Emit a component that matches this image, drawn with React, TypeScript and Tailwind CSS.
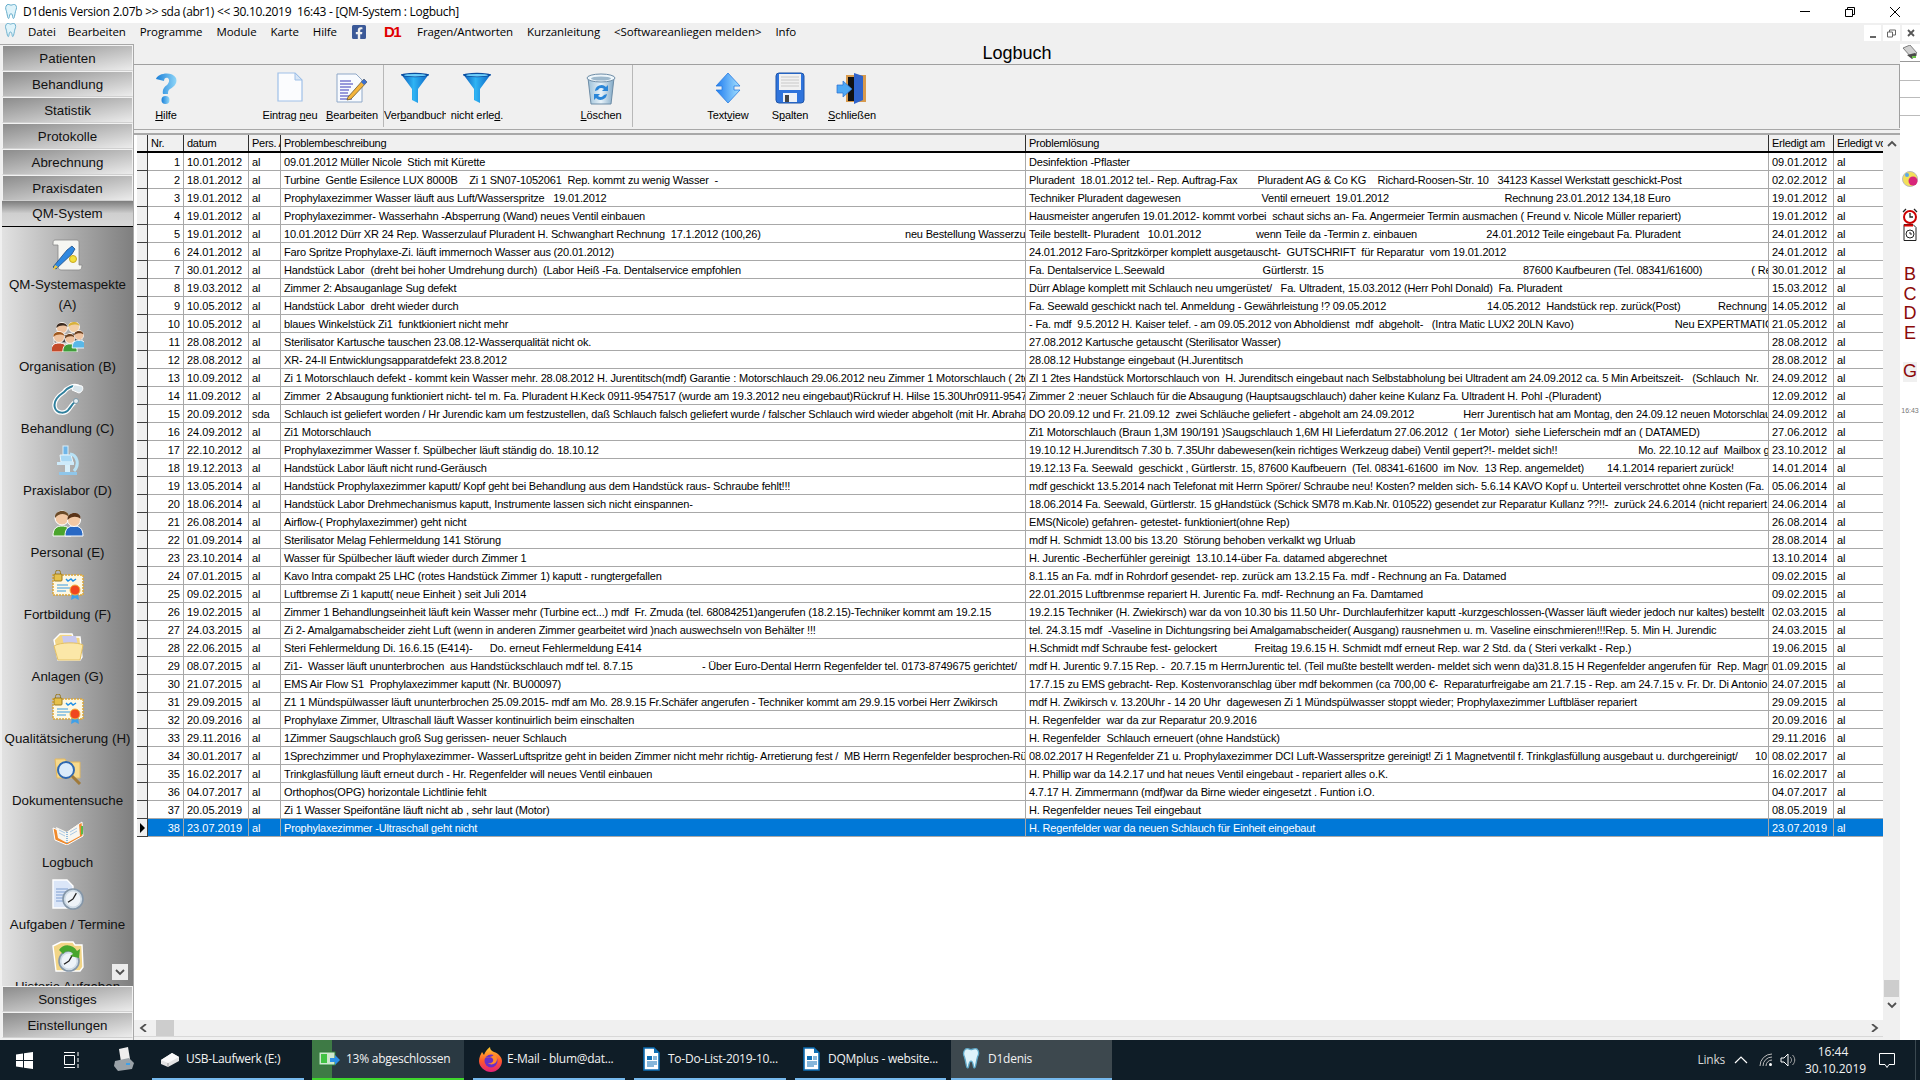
import { FaFacebookSquare } from "react-icons/fa";

const gap = (n: number) => " ".repeat(Math.round(n * 1.06));

type Row = [number, string, string, string, string, string];

const rows: Row[] = [
  [1, "10.01.2012", "al", "09.01.2012 Müller Nicole  Stich mit Kürette", "Desinfektion -Pflaster", "09.01.2012"],
  [2, "18.01.2012", "al", "Turbine  Gentle Esilence LUX 8000B    Zi 1 SN07-1052061  Rep. kommt zu wenig Wasser  -", `Pluradent  18.01.2012 tel.- Rep. Auftrag-Fax${gap(7)}Pluradent AG & Co KG    Richard-Roosen-Str. 10   34123 Kassel Werkstatt geschickt-Post`, "02.02.2012"],
  [3, "19.01.2012", "al", "Prophylaxezimmer Wasser läuft aus Luft/Wasserspritze   19.01.2012", `Techniker Pluradent dagewesen${gap(26)}Ventil erneuert  19.01.2012${gap(38)}Rechnung 23.01.2012 134,18 Euro`, "19.01.2012"],
  [4, "19.01.2012", "al", "Prophylaxezimmer- Wasserhahn -Absperrung (Wand) neues Ventil einbauen", "Hausmeister angerufen 19.01.2012- kommt vorbei  schaut sichs an- Fa. Angermeier Termin ausmachen ( Freund v. Nicole Müller repariert)", "19.01.2012"],
  [5, "19.01.2012", "al", `10.01.2012 Dürr XR 24 Rep. Wasserzulauf Pluradent H. Schwanghart Rechnung  17.1.2012 (100,26)${gap(47)}neu Bestellung Wasserzulauf`, `Teile bestellt- Pluradent   10.01.2012${gap(18)}wenn Teile da -Termin z. einbauen${gap(23)}24.01.2012 Teile eingebaut Fa. Pluradent`, "24.01.2012"],
  [6, "24.01.2012", "al", "Faro Spritze Prophylaxe-Zi. läuft immernoch Wasser aus (20.01.2012)", "24.01.2012 Faro-Spritzkörper komplett ausgetauscht-  GUTSCHRIFT  für Reparatur  vom 19.01.2012", "24.01.2012"],
  [7, "30.01.2012", "al", "Handstück Labor  (dreht bei hoher Umdrehung durch)  (Labor Heiß -Fa. Dentalservice empfohlen", `Fa. Dentalservice L.Seewald${gap(32)}Gürtlerstr. 15${gap(65)}87600 Kaufbeuren (Tel. 08341/61600)${gap(16)}( Rechnung`, "30.01.2012"],
  [8, "19.03.2012", "al", "Zimmer 2: Absauganlage Sug defekt", "Dürr Ablage komplett mit Schlauch neu umgerüstet/   Fa. Ultradent, 15.03.2012 (Herr Pohl Donald)  Fa. Pluradent", "15.03.2012"],
  [9, "10.05.2012", "al", "Handstück Labor  dreht wieder durch", `Fa. Seewald geschickt nach tel. Anmeldung - Gewährleistung !? 09.05.2012${gap(33)}14.05.2012  Handstück rep. zurück(Post)${gap(12)}Rechnung`, "14.05.2012"],
  [10, "10.05.2012", "al", "blaues Winkelstück Zi1  funktkioniert nicht mehr", `- Fa. mdf  9.5.2012 H. Kaiser telef. - am 09.05.2012 von Abholdienst  mdf  abgeholt-   (Intra Matic LUX2 20LN Kavo)${gap(33)}Neu EXPERTMATIC`, "21.05.2012"],
  [11, "28.08.2012", "al", "Sterilisator Kartusche tauschen 23.08.12-Wasserqualität nicht ok.", "27.08.2012 Kartusche getauscht (Sterilisator Wasser)", "28.08.2012"],
  [12, "28.08.2012", "al", "XR- 24-II Entwicklungsapparatdefekt 23.8.2012", "28.08.12 Hubstange eingebaut (H.Jurentitsch", "28.08.2012"],
  [13, "10.09.2012", "al", "Zi 1 Motorschlauch defekt - kommt kein Wasser mehr. 28.08.2012 H. Jurentitsch(mdf) Garantie : Motorschlauch 29.06.2012 neu Zimmer 1 Motorschlauch ( 2tes", "ZI 1 2tes Handstück Mortorschlauch von  H. Jurenditsch eingebaut nach Selbstabholung bei Ultradent am 24.09.2012 ca. 5 Min Arbeitszeit-   (Schlauch  Nr.", "24.09.2012"],
  [14, "11.09.2012", "al", "Zimmer  2 Absaugung funktioniert nicht- tel m. Fa. Pluradent H.Keck 0911-9547517 (wurde am 19.3.2012 neu eingebaut)Rückruf H. Hilse 15.30Uhr0911-9547", "Zimmer 2 :neuer Schlauch für die Absaugung (Hauptsaugschlauch) daher keine Kulanz Fa. Ultradent H. Pohl -(Pluradent)", "12.09.2012"],
  [15, "20.09.2012", "sda", "Schlauch ist geliefert worden / Hr Jurendic kam um festzustellen, daß Schlauch falsch geliefert wurde / falscher Schlauch wird wieder abgeholt (mit Hr. Abraham", `DO 20.09.12 und Fr. 21.09.12  zwei Schläuche geliefert - abgeholt am 24.09.2012${gap(16)}Herr Jurentisch hat am Montag, den 24.09.12 neuen Motorschlauch`, "24.09.2012"],
  [16, "24.09.2012", "al", "Zi1 Motorschlauch", "Zi1 Motorschlauch (Braun 1,3M 190/191 )Saugschlauch 1,6M HI Lieferdatum 27.06.2012  ( 1er Motor)  siehe Lieferschein mdf an ( DATAMED)", "27.06.2012"],
  [17, "22.10.2012", "al", "Prophylaxezimmer Wasser f. Spülbecher läuft ständig do. 18.10.12", `19.10.12 H.Jurenditsch 7.30 b. 7.35Uhr dabewesen(kein richtiges Werkzeug dabei) Ventil gepert?!- meldet sich!!${gap(26)}Mo. 22.10.12 auf  Mailbox gesprochen`, "23.10.2012"],
  [18, "19.12.2013", "al", "Handstück Labor läuft nicht rund-Geräusch", `19.12.13 Fa. Seewald  geschickt , Gürtlerstr. 15, 87600 Kaufbeuern  (Tel. 08341-61600  im Nov.  13 Rep. angemeldet)${gap(8)}14.1.2014 repariert zurück!`, "14.01.2014"],
  [19, "13.05.2014", "al", "Handstück Prophylaxezimmer kaputt/ Kopf geht bei Behandlung aus dem Handstück raus- Schraube fehlt!!!", "mdf geschickt 13.5.2014 nach Telefonat mit Herrn Spörer/ Schraube neu! Kosten? melden sich- 5.6.14 KAVO Kopf u. Unterteil verschrottet ohne Kosten (Fa.", "05.06.2014"],
  [20, "18.06.2014", "al", "Handstück Labor Drehmechanismus kaputt, Instrumente lassen sich nicht einspannen-", "18.06.2014 Fa. Seewald, Gürtlerstr. 15 gHandstück (Schick SM78 m.Kab.Nr. 010522) gesendet zur Reparatur Kullanz ??!!-  zurück 24.6.2014 (nicht repariert", "24.06.2014"],
  [21, "26.08.2014", "al", "Airflow-( Prophylaxezimmer) geht nicht", "EMS(Nicole) gefahren- getestet- funktioniert(ohne Rep)", "26.08.2014"],
  [22, "01.09.2014", "al", "Sterilisator Melag Fehlermeldung 141 Störung", "mdf H. Schmidt 13.00 bis 13.20  Störung behoben verkalkt wg Urluab", "28.08.2014"],
  [23, "23.10.2014", "al", "Wasser für Spülbecher läuft wieder durch Zimmer 1", "H. Jurentic -Becherfühler gereinigt  13.10.14-über Fa. datamed abgerechnet", "13.10.2014"],
  [24, "07.01.2015", "al", "Kavo Intra compakt 25 LHC (rotes Handstück Zimmer 1) kaputt - rungtergefallen", "8.1.15 an Fa. mdf in Rohrdorf gesendet- rep. zurück am 13.2.15 Fa. mdf - Rechnung an Fa. Datamed", "09.02.2015"],
  [25, "09.02.2015", "al", "Luftbremse Zi 1 kaputt( neue Einheit ) seit Juli 2014", "22.01.2015 Luftbrenmse repariert H. Jurentic Fa. mdf- Rechnung an Fa. Damtamed", "09.02.2015"],
  [26, "19.02.2015", "al", "Zimmer 1 Behandlungseinheit läuft kein Wasser mehr (Turbine ect...) mdf  Fr. Zmuda (tel. 68084251)angerufen (18.2.15)-Techniker kommt am 19.2.15", "19.2.15 Techniker (H. Zwiekirsch) war da von 10.30 bis 11.50 Uhr- Durchlauferhitzer kaputt -kurzgeschlossen-(Wasser läuft wieder jedoch nur kaltes) bestellt", "02.03.2015"],
  [27, "24.03.2015", "al", "Zi 2- Amalgamabscheider zieht Luft (wenn in anderen Zimmer gearbeitet wird )nach auswechseln von Behälter !!!", "tel. 24.3.15 mdf  -Vaseline in Dichtungsring bei Amalgamabscheider( Ausgang) rausnehmen u. m. Vaseline einschmieren!!!Rep. 5. Min H. Jurendic", "24.03.2015"],
  [28, "22.06.2015", "al", `Steri Fehlermeldung Di. 16.6.15 (E414)-${gap(6)}Do. erneut Fehlermeldung E414`, `H.Schmidt mdf Schraube fest- gelockert${gap(12)}Freitag 19.6.15 H. Schmidt mdf erneut Rep. war 2 Std. da ( Steri verkalkt - Rep.)`, "19.06.2015"],
  [29, "08.07.2015", "al", `Zi1-  Wasser läuft ununterbrochen  aus Handstückschlauch mdf tel. 8.7.15${gap(23)}- Über Euro-Dental Herrn Regenfelder tel. 0173-8749675 gerichtet/`, "mdf H. Jurentic 9.7.15 Rep. -  20.7.15 m HerrnJurentic tel. (Teil mußte bestellt werden- meldet sich wenn da)31.8.15 H Regenfelder angerufen für  Rep. Magnet", "01.09.2015"],
  [30, "21.07.2015", "al", "EMS Air Flow S1  Prophylaxezimmer kaputt (Nr. BU00097)", "17.7.15 zu EMS gebracht- Rep. Kostenvoranschlag über mdf bekommen (ca 700,00 €-  Reparaturfreigabe am 21.7.15 - Rep. am 24.7.15 v. Fr. Dr. Di Antonio", "24.07.2015"],
  [31, "29.09.2015", "al", "Z1 1 Mündspülwasser läuft ununterbrochen 25.09.2015- mdf am Mo. 28.9.15 Fr.Schäfer angerufen - Techniker kommt am 29.9.15 vorbei Herr Zwikirsch", "mdf H. Zwikirsch v. 13.20Uhr - 14 20 Uhr  dagewesen Zi 1 Mündspülwasser stoppt wieder; Prophylaxezimmer Luftbläser repariert", "29.09.2015"],
  [32, "20.09.2016", "al", "Prophylaxe Zimmer, Ultraschall läuft Wasser kontinuirlich beim einschalten", "H. Regenfelder  war da zur Reparatur 20.9.2016", "20.09.2016"],
  [33, "29.11.2016", "al", "1Zimmer Saugschlauch groß Sug gerissen- neuer Schlauch", "H. Regenfelder  Schlauch erneuert (ohne Handstück)", "29.11.2016"],
  [34, "30.01.2017", "al", "1Sprechzimmer und Prophylaxezimmer- WasserLuftspritze geht in beiden Zimmer nicht mehr richtig- Arretierung fest /  MB Herrn Regenfelder besprochen-Rückruf", `08.02.2017 H Regenfelder Z1 u. Prophylaxezimmer DCI Luft-Wasserspritze gereinigt! Zi 1 Magnetventil f. Trinkglasfüllung ausgebaut u. durchgereinigt/${gap(6)}10`, "08.02.2017"],
  [35, "16.02.2017", "al", "Trinkglasfüllung läuft erneut durch - Hr. Regenfelder will neues Ventil einbauen", "H. Phillip war da 14.2.17 und hat neues Ventil eingebaut - repariert alles o.K.", "16.02.2017"],
  [36, "04.07.2017", "al", "Orthophos(OPG) horizontale Lichtlinie fehlt", "4.7.17 H. Zimmermann (mdf)war da Birne wieder eingesetzt . Funtion i.O.", "04.07.2017"],
  [37, "20.05.2019", "al", "Zi 1 Wasser Speifontäne läuft nicht ab , sehr laut (Motor)", "H. Regenfelder neues Teil eingebaut", "08.05.2019"],
  [38, "23.07.2019", "al", "Prophylaxezimmer -Ultraschall geht nicht", "H. Regenfelder war da neuen Schlauch für Einheit eingebaut", "23.07.2019"],
];

const gridCols = "grid grid-rows-[18px] grid-cols-[11px_36px_65px_32px_745px_743px_65px_49px]";

const Tooth = ({ size = 16 }: { size?: number }) => (
  <svg width={size} height={size} viewBox="0 0 16 20">
    <path d="M3 1c2-1 3 0 5 .5C10 1 12 0 13.500 1c2 2 1.500 5 .5 7-.7 2-1 5-1.800 8-.4 2-1.400 3-1.900 1-.4-2-.6-5-2.300-5-1.700 0-1.800 3-2.300 5-.5 2-1.500 1-1.900-1C3.100 13 2.700 10 2 8 1 6 1 3 3 1z" fill="#dff3fa" stroke="#5fa9c9" strokeWidth="1.200" />
  </svg>
);

const Funnel = () => (
  <svg width="30" height="32" viewBox="0 0 30 32">
    <defs>
      <linearGradient id="fn" x1="0" x2="1">
        <stop offset="0" stopColor="#0a58b8" />
        <stop offset=".45" stopColor="#2fb4f4" />
        <stop offset="1" stopColor="#0b63c4" />
      </linearGradient>
    </defs>
    <path d="M1 2h28L18 17v14l-6-3V17z" fill="url(#fn)" />
    <ellipse cx="15" cy="3" rx="14" ry="2.200" fill="#0a4d9f" />
    <ellipse cx="15" cy="3.200" rx="11" ry="1.200" fill="#6fd0fa" />
  </svg>
);

const toolbarIcons: Record<string, React.ReactNode> = {
  help: (
    <svg width="24" height="33" viewBox="0 0 24 33">
      <defs>
        <linearGradient id="hq" x1="0" x2="1">
          <stop offset="0" stopColor="#1a7fd8" />
          <stop offset="1" stopColor="#8fd6f8" />
        </linearGradient>
      </defs>
      <path d="M2 7C4 1 18-1 22 6c2 6-3 9-6 11-2 1-2 3-2 5H9c-1-4 1-7 4-9 2-2 3-5 1-7-2-1-4 0-4 3z" fill="url(#hq)" />
      <circle cx="11.500" cy="28" r="4" fill="url(#hq)" />
    </svg>
  ),
  new: (
    <svg width="26" height="30" viewBox="0 0 26 30">
      <path d="M1 1h17l7 7v21H1z" fill="#fbfcfe" stroke="#9fc0e8" strokeWidth="1.200" />
      <path d="M18 1v7h7z" fill="#d8e6f6" stroke="#9fc0e8" />
    </svg>
  ),
  edit: (
    <svg width="32" height="32" viewBox="0 0 32 32">
      <path d="M1 2h19l6 6v22H1z" fill="#f8fbff" stroke="#8fa8c8" />
      <path d="M4 9h11M4 12h13M4 15h11M4 18h9M4 21h8M4 24h10M4 27h12" stroke="#3a3ab8" strokeWidth="1.200" />
      <path d="M12 25l16-18 3 3-16 17-4 1z" fill="#f4b43c" stroke="#6b5a30" strokeWidth=".8" />
      <path d="M25 10l3-3 3 3-3 3z" fill="#3a6fd0" />
    </svg>
  ),
  filter: <Funnel />,
  trash: (
    <svg width="32" height="34" viewBox="0 0 32 34">
      <defs>
        <linearGradient id="tr" x1="0" x2="1">
          <stop offset="0" stopColor="#9cc0d8" />
          <stop offset=".5" stopColor="#e8f3fa" />
          <stop offset="1" stopColor="#7ea6c4" />
        </linearGradient>
      </defs>
      <path d="M3 6l3 26h20l3-26z" fill="url(#tr)" stroke="#6d8ca6" />
      <ellipse cx="16" cy="6" rx="14" ry="4" fill="#eef6fb" stroke="#6d8ca6" />
      <ellipse cx="16" cy="6.500" rx="10" ry="2" fill="#9db8cc" />
      <path d="M10 19a6.500 6.500 0 0 1 11-4l2-2v6h-6l2-2a4 4 0 0 0-6 1zM22 22a6.500 6.500 0 0 1-11 4l-2 2v-6h6l-2 2a4 4 0 0 0 6-1z" fill="#2a86d8" />
    </svg>
  ),
  textview: (
    <svg width="26" height="32" viewBox="0 0 26 32">
      <defs>
        <linearGradient id="tv" x1="0" x2="1">
          <stop offset="0" stopColor="#1e7cf0" />
          <stop offset="1" stopColor="#a4e0ff" />
        </linearGradient>
      </defs>
      <path d="M13 1l12 13h-6v4h6L13 31 1 18h6v-4H1z" fill="url(#tv)" stroke="#2a7be0" strokeWidth=".8" />
    </svg>
  ),
  save: (
    <svg width="30" height="32" viewBox="0 0 30 32">
      <rect x="1" y="1" width="28" height="30" rx="3" fill="#2f74dc" stroke="#1f55a8" />
      <rect x="4" y="2" width="22" height="16" fill="#f1f1f1" />
      <path d="M6 5h18M6 8h18M6 11h18M6 14h18" stroke="#c9c9c9" />
      <rect x="8" y="21" width="14" height="9" fill="#eef2f8" />
      <rect x="10" y="23" width="4" height="7" fill="#444" />
    </svg>
  ),
  exit: (
    <svg width="32" height="32" viewBox="0 0 32 32">
      <rect x="10" y="3" width="20" height="27" fill="#d89a4c" />
      <rect x="12" y="5" width="8" height="24" fill="#111" />
      <path d="M18 1l9 3v24l-9 4z" fill="#2f64cc" />
      <path d="M1 13h6V9l9 8-9 8v-4H1z" fill="#4ea8f4" stroke="#2a6fd0" strokeWidth=".7" />
    </svg>
  ),
};

const toolbarItems: ({ icon: string; before: string; key: string; after: string } | null | "sep" | "wide")[] = [
  { icon: "help", before: "", key: "H", after: "ilfe" },
  null,
  { icon: "new", before: "Eintrag ", key: "n", after: "eu" },
  { icon: "edit", before: "", key: "B", after: "earbeiten" },
  "sep",
  { icon: "filter", before: "Ver", key: "b", after: "andbuch" },
  { icon: "filter", before: "nicht erle", key: "d", after: "." },
  null,
  { icon: "trash", before: "", key: "L", after: "öschen" },
  "sep",
  "wide",
  { icon: "textview", before: "Text", key: "v", after: "iew" },
  { icon: "save", before: "S", key: "p", after: "alten" },
  { icon: "exit", before: "", key: "S", after: "chließen" },
];

const Person = ({ x, y, skin, shirt, hair, s = 1 }: { x: number; y: number; skin: string; shirt: string; hair: string; s?: number }) => (
  <g transform={`translate(${x} ${y}) scale(${s})`}>
    <path d="M-8 20c0-7 3-9 8-9s8 2 8 9z" fill={shirt} stroke="#fff" strokeWidth="1" />
    <circle cx="0" cy="5" r="5.500" fill={skin} stroke="#fff" strokeWidth=".8" />
    <path d="M-5.500 5c-1-6 10-7 11-1-3-2-8-2-11 1z" fill={hair} />
  </g>
);

const Certificate = () => (
  <svg width="32" height="30" viewBox="0 0 32 30">
    <rect x="1" y="5" width="30" height="20" fill="#fdf8e4" stroke="#d9a53a" strokeWidth="1.500" strokeDasharray="2 1" />
    <path d="M5 15h11M5 18h13M5 21h9" stroke="#3a9be0" />
    <path d="M14 9l2 2 3-2 2 2 3-2" stroke="#1d8fe8" strokeWidth="1.400" fill="none" />
    <rect x="2" y="4" width="8" height="7" rx="1" fill="#e6c04a" stroke="#9a7a20" />
    <path d="M3.500 4V2.500a2.500 2.500 0 0 1 5 0V4" fill="none" stroke="#9a7a20" />
    <path d="M20 24l-1 6 4-2 4 2-1-6z" fill="#3fa0e8" />
    <circle cx="23" cy="20" r="5" fill="#f0461e" stroke="#f4b43c" />
  </svg>
);

const OpenFolder = () => (
  <svg width="32" height="30" viewBox="0 0 32 30">
    <path d="M2 8l6-6h12l1 3h7l2 20-2 3H6z" fill="#f2d586" stroke="#fff" strokeWidth="1.400" />
    <path d="M10 4h14l2 10H12z" fill="#c9c9ef" />
    <path d="M2 14c6-4 24-4 29-1l-3 15H6z" fill="#fbe7a8" stroke="#e3bf62" />
  </svg>
);

const ClockFace = ({ cx, cy, r }: { cx: number; cy: number; r: number }) => (
  <g>
    <circle cx={cx} cy={cy} r={r} fill="#cfdbe6" stroke="#8496a8" strokeWidth="1.600" />
    <circle cx={cx} cy={cy} r={r - 2.500} fill="#eef3f8" />
    <path d={`M${cx} ${cy}l${-r / 2} ${r / 3}M${cx} ${cy}l${r / 3} ${-r / 1.700}`} stroke="#222" strokeWidth="1.300" />
  </g>
);

const sideIcons: Record<string, React.ReactNode> = {
  scroll: (
    <svg width="32" height="32" viewBox="0 0 32 32">
      <path d="M3 1h22c2 0 2 2 2 4v21h3c0 3-1 5-3 5H9c-2 0-3-2-3-4V6H1c0-3 0-5 2-5z" fill="#f6f6f2" stroke="#888" strokeWidth=".8" />
      <path d="M1 28l14-17 5-4 3 3-3 5-16 15z" fill="#2f88e0" stroke="#123f77" strokeWidth=".7" />
      <path d="M1 31l2-5 3 2z" fill="#f2c83c" />
      <circle cx="21" cy="20" r="3.500" fill="#f4e13c" stroke="#c9a820" />
    </svg>
  ),
  group: (
    <svg width="32" height="30" viewBox="0 0 32 30">
      <Person x={10} y={1} skin="#eec3a0" shirt="#444" hair="#3a2a20" />
      <Person x={22} y={0} skin="#f2cfa6" shirt="#333" hair="#d8b23c" />
      <Person x={7} y={10} skin="#eec3a0" shirt="#c44a2a" hair="#a05a20" />
      <Person x={18} y={12} skin="#eec3a0" shirt="#3f9c3a" hair="#6a4020" s={0.9} />
      <Person x={27} y={9} skin="#eec3a0" shirt="#5ab8e8" hair="#6a4020" s={0.85} />
    </svg>
  ),
  stethoscope: (
    <svg width="32" height="32" viewBox="0 0 32 32">
      <path d="M28 5c-6-5-14 1-16 4C6 13 1 19 3 25c2 6 11 6 14 1 2-2 3-5 6-7" fill="none" stroke="#fff" strokeWidth="4.500" />
      <path d="M28 5c-6-5-14 1-16 4C6 13 1 19 3 25c2 6 11 6 14 1 2-2 3-5 6-7" fill="none" stroke="#2f7f9c" strokeWidth="2" />
      <path d="M22 2l8 1c2 3 0 6-3 7l-7-3z" fill="#d8e4ea" stroke="#fff" />
      <circle cx="24" cy="18" r="2.500" fill="#e8eef2" stroke="#7a9aaa" />
    </svg>
  ),
  microscope: (
    <svg width="24" height="32" viewBox="0 0 24 32">
      <rect x="7" y="1" width="5" height="9" fill="#6fb5e8" stroke="#d8eefa" />
      <path d="M4 10h11l2 7H5z" fill="#a9d8f4" stroke="#e8f6fd" />
      <path d="M14 9c7 1 10 10 4 17" fill="none" stroke="#b8e2f6" strokeWidth="3" />
      <rect x="1" y="17" width="17" height="3" fill="#cdeafa" />
      <path d="M3 27h18v3H3z" fill="#8fc6ea" />
      <rect x="9" y="20" width="5" height="7" fill="#d8effa" />
    </svg>
  ),
  people: (
    <svg width="32" height="28" viewBox="0 0 32 28">
      <path d="M1 27c0-8 4-10 9-10s9 2 9 10z" fill="#4ba52c" stroke="#fff" />
      <circle cx="10" cy="9" r="7" fill="#f2c8a4" stroke="#fff" />
      <path d="M3 9C2 0 17 0 17 8 13 4 7 4 3 9z" fill="#6a4a28" />
      <path d="M13 27c0-8 4-10 9-10s9 2 9 10z" fill="#2868c4" stroke="#fff" />
      <circle cx="22" cy="11" r="6.500" fill="#f2c8a4" stroke="#fff" />
      <path d="M15.500 11c-1-9 14-9 13-1-3-3-9-3-13 1z" fill="#5a3418" />
    </svg>
  ),
  cert: <Certificate />,
  folder: <OpenFolder />,
  search: (
    <svg width="28" height="28" viewBox="0 0 28 28">
      <path d="M1 2h10l2 3h13v16H3z" fill="#f6d98c" stroke="#e2b860" />
      <circle cx="12" cy="13" r="8" fill="#dcecfa" stroke="#2f68b0" strokeWidth="2" />
      <path d="M18 19l8 8" stroke="#a07a3a" strokeWidth="3" />
    </svg>
  ),
  book: (
    <svg width="32" height="24" viewBox="0 0 32 24">
      <path d="M1 7l13 5 16-11 1 14-16 9L3 19z" fill="#f08a2c" stroke="#fff" />
      <path d="M4 6l11 5 12-8 1 12-13 7L6 17z" fill="#f8f6f0" />
      <path d="M15 11v11" stroke="#6fa8d8" strokeWidth="1.500" strokeDasharray="1 1" />
      <path d="M7 9l6 3M7 12l6 3M18 11l7-4M18 14l7-4" stroke="#aac8e4" />
      <path d="M29 5l2 0v8l-2 1z" fill="#5eb844" />
    </svg>
  ),
  docclock: (
    <svg width="32" height="32" viewBox="0 0 32 32">
      <path d="M1 1h14l6 6v22H1z" fill="#dbe6f8" stroke="#fff" strokeWidth="1.400" />
      <path d="M4 10h12M4 13h10M4 16h9M4 19h8M4 22h8" stroke="#7e9ed0" />
      <ClockFace cx={21} cy={20} r={10} />
    </svg>
  ),
  folderclock: (
    <svg width="32" height="32" viewBox="0 0 32 32">
      <path d="M1 5l8-4h12l2 3h7l1 22-3 4H4z" fill="#f2d586" stroke="#fff" strokeWidth="1.400" />
      <ClockFace cx={17} cy={20} r={10} />
      <path d="M7 9c4-7 14-6 18 1l3-2-1 9-9-2 3-2c-2-3-7-4-10 0z" fill="#47a62e" />
    </svg>
  ),
};

const sideItems: { icon: string; label: string[] }[] = [
  { icon: "scroll", label: ["QM-Systemaspekte", "(A)"] },
  { icon: "group", label: ["Organisation (B)"] },
  { icon: "stethoscope", label: ["Behandlung (C)"] },
  { icon: "microscope", label: ["Praxislabor (D)"] },
  { icon: "people", label: ["Personal (E)"] },
  { icon: "cert", label: ["Fortbildung (F)"] },
  { icon: "folder", label: ["Anlagen (G)"] },
  { icon: "cert", label: ["Qualitätsicherung (H)"] },
  { icon: "search", label: ["Dokumentensuche"] },
  { icon: "book", label: ["Logbuch"] },
  { icon: "docclock", label: ["Aufgaben / Termine"] },
  { icon: "folderclock", label: ["Historie Aufgaben"] },
];

const SideButton = ({ label }: { label: string }) => (
  <div className="h-[26px] shrink-0 pt-px border border-[#f2f2f2] border-b-[#d0d0d0] bg-linear-to-br from-[#8c8c8c] to-[#ececec] flex items-center justify-center text-[13.33px] text-[#111]">
    {label}
  </div>
);

const Chevron = ({ d, cls = "" }: { d: string; cls?: string }) => (
  <svg width="10" height="8" viewBox="0 0 10 8" className={cls}>
    <path d={d} fill="none" stroke="#505050" strokeWidth="1.800" />
  </svg>
);

const DocIcon = () => (
  <svg width="17" height="24" viewBox="0 0 17 24">
    <path d="M1 1h10l5 5v17H1z" fill="#fff" stroke="#0f6fb5" strokeWidth="1.600" />
    <path d="M11 1v5h5z" fill="#0f6fb5" />
    <rect x="4" y="9" width="5" height="4" fill="#0f6fb5" />
    <path d="M10 10h4M10 12h4M4 15h10M4 17h10M4 19h7" stroke="#0f6fb5" />
  </svg>
);

const headCell = "border-r border-[#303030] px-[3px] leading-[17px] tracking-[-0.25px] overflow-hidden";

const App = () => {
  return (
    <div className="w-[1920px] h-[1080px] overflow-hidden flex flex-col bg-[#f0f0f0] font-['Liberation_Sans',sans-serif] text-black">
      {/* window title */}
      <div className="h-[23px] shrink-0 bg-white flex items-center relative pl-[3px] text-[12px] font-['Open_Sans',sans-serif]">
        <Tooth size={16} />
        <span className="ml-[4px] whitespace-pre tracking-[-0.28px]">D1denis Version 2.07b &gt;&gt; sda (abr1) &lt;&lt; 30.10.2019  16:43 - [QM-System : Logbuch]</span>
        <div className="ml-auto flex items-center gap-[35px] pr-[20px]">
          <div className="w-[10px] h-px bg-black" />
          <svg width="10" height="10" viewBox="0 0 10 10"><path d="M.5 2.500h7v7h-7zM2.500 2.500v-2h7v7h-2" fill="none" stroke="#000" /></svg>
          <svg width="10" height="10" viewBox="0 0 10 10"><path d="M0 0l10 10M10 0L0 10" stroke="#000" /></svg>
        </div>
      </div>

      {/* menu */}
      <div className="h-[21px] shrink-0 flex items-start pl-[3px] text-[11.5px] leading-[18px] font-['Open_Sans',sans-serif] whitespace-pre">
        <Tooth size={15} />
        <div className="ml-[10px] flex items-center gap-[14px] tracking-[-0.1px]">
          <span>Datei</span>
          <span className="-ml-[2px]">Bearbeiten</span>
          <span>Programme</span>
          <span>Module</span>
          <span>Karte</span>
          <span>Hilfe</span>
          <FaFacebookSquare className="text-[#3b5998] text-[16px]" />
          <span className="mx-[3px] font-['Liberation_Sans',sans-serif] font-bold text-[15px] leading-[18px] text-[#e00000] tracking-[-1.5px]">D1</span>
          <span>Fragen/Antworten</span>
          <span>Kurzanleitung</span>
          <span>&lt;Softwareanliegen melden&gt;</span>
          <span>Info</span>
        </div>
        <div className="ml-auto mt-[2px] flex items-center gap-[2px] text-[#555]">
          <div className="w-[17px] h-[16px] bg-white flex items-end justify-center pb-[3px]"><div className="w-[6px] h-[2px] bg-[#666]" /></div>
          <div className="w-[17px] h-[16px] bg-white flex items-center justify-center">
            <svg width="9" height="9" viewBox="0 0 9 9"><path d="M.5 3h5v5h-5zM2.500 3V1h6v5h-3" fill="none" stroke="#666" /></svg>
          </div>
          <div className="w-[18px] h-[16px] bg-white flex items-center justify-center">
            <svg width="8" height="8" viewBox="0 0 8 8"><path d="M1 1l6 6M7 1L1 7" stroke="#555" strokeWidth="1.800" /></svg>
          </div>
        </div>
      </div>

      <div className="flex-1 flex min-h-0">
        {/* left navigation */}
        <div className="w-[134px] shrink-0 flex flex-col border-t border-r border-[#a8a8a8] pl-[2px] pb-[2px]">
          <SideButton label="Patienten" />
          <SideButton label="Behandlung" />
          <SideButton label="Statistik" />
          <SideButton label="Protokolle" />
          <SideButton label="Abrechnung" />
          <SideButton label="Praxisdaten" />
          <div className="h-[26px] shrink-0 pt-px border-b border-black bg-linear-to-b from-[#7d7d7d] via-[#cfcfcf] to-[#d8d8d8] flex items-center justify-center text-[13.33px] text-[#111]">
            QM-System
          </div>
          <div className="flex-1 min-h-0 overflow-hidden relative bg-linear-to-r from-[#e2e2e2] to-[#7f7f7f] pt-[6px]">
            {sideItems.map((item) => (
              <div key={item.label[0]} className="flex flex-col items-center pt-[6px]">
                <div className="h-[32px] flex items-center justify-center">{sideIcons[item.icon]}</div>
                <div className="mt-[4px] text-[13.33px] leading-[20px] text-[#111] text-center whitespace-nowrap">
                  {item.label.map((line) => (
                    <div key={line}>{line}</div>
                  ))}
                </div>
              </div>
            ))}
            <div className="absolute right-[5px] bottom-[6px] w-[16px] h-[16px] bg-[#ececec] flex items-center justify-center">
              <Chevron d="M1 2l4 4 4-4" />
            </div>
          </div>
          <SideButton label="Sonstiges" />
          <SideButton label="Einstellungen" />
        </div>

        {/* main area */}
        <div className="w-[1766px] shrink-0 flex flex-col pb-[3px]">
          <div className="h-[20px] shrink-0 pb-[3px] flex items-center justify-center text-[18px] leading-none">Logbuch</div>

          <div className="h-[64px] shrink-0 flex border-t border-r-2 border-[#a0a0a0] pl-px -mr-px">
            {toolbarItems.map((item, i) => {
              if (item === "sep") return <div key={i} className="w-px h-[62px] bg-[#b8b8b8]" />;
              if (item === "wide") return <div key={i} className="w-[64px]" />;
              if (item === null) return <div key={i} className="w-[62px]" />;
              return (
                <div key={i} className="w-[62px] flex flex-col items-center overflow-hidden">
                  <div className="h-[43px] pt-[7px] flex items-start justify-center">{toolbarIcons[item.icon]}</div>
                  <div className="w-full text-[11px] leading-[14px] whitespace-pre text-center overflow-hidden tracking-[-0.1px]">
                    {item.before}
                    <u>{item.key}</u>
                    {item.after}
                  </div>
                </div>
              );
            })}
          </div>

          <div className="h-[6px] shrink-0 border-t border-[#a8a8a8] border-b-2 mt-[1px] -mr-px" />

          {/* grid */}
          <div className="flex-1 min-h-0 flex">
            <div className="w-[1749px] pl-[3px] flex flex-col text-[11px] bg-white">
              <div className={`${gridCols} h-[18px] shrink-0 overflow-hidden bg-[#f0f0f0] border-b-2 border-black whitespace-pre`}>
                <div className="border-r border-[#303030]" />
                <div className={headCell}>Nr.</div>
                <div className={headCell}>datum</div>
                <div className={headCell}>Pers. Anm</div>
                <div className={headCell}>Problembeschreibung</div>
                <div className={headCell}>Problemlösung</div>
                <div className={headCell}>Erledigt am</div>
                <div className="px-[3px] leading-[17px] tracking-[-0.25px] overflow-hidden">Erledigt von</div>
              </div>
              <div className="flex-1 min-h-0 overflow-hidden">
                {rows.map(([nr, datum, pers, problem, solution, done]) => {
                  const active = nr === 38;
                  const line = "border-r border-b border-[#a8a8a8] overflow-hidden";
                  return (
                    <div key={nr} className={`${gridCols} h-[18px] leading-[19px] whitespace-pre ${active ? "bg-[#0078d7] text-white" : ""}`}>
                      <div className="bg-[#f0f0f0] border-r border-b border-[#404040] flex items-center">
                        {active && <div className="ml-[3px] w-0 h-0 border-y-[5px] border-y-transparent border-l-[5px] border-l-black" />}
                      </div>
                      <div className={`${line} text-right pr-[3px]`}>{nr}</div>
                      <div className={`${line} pl-[3px]`}>{datum}</div>
                      <div className={`${line} pl-[3px]`}>{pers}</div>
                      <div className={`${line} pl-[3px] tracking-[-0.17px]`}>{problem}</div>
                      <div className={`${line} pl-[3px] tracking-[-0.17px]`}>{solution}</div>
                      <div className={`${line} pl-[3px]`}>{done}</div>
                      <div className="border-b border-[#a8a8a8] pl-[3px] overflow-hidden">al</div>
                    </div>
                  );
                })}
              </div>
              <div className="h-[17px] shrink-0 bg-[#f0f0f0] -ml-[3px] pl-[5px] flex items-center border-b border-[#d8d8d8]">
                <Chevron d="M7 0L2 4l5 4" />
                <div className="ml-[7px] w-[18px] h-full bg-[#cdcdcd]" />
                <Chevron d="M3 0l5 4-5 4" cls="ml-auto mr-[4px]" />
              </div>
            </div>
            <div className="w-[17px] bg-[#f0f0f0] flex flex-col items-center py-[5px]">
              <Chevron d="M1 6l4-4 4 4" />
              <div className="mt-auto w-[15px] h-[17px] bg-[#cdcdcd]" />
              <Chevron d="M1 2l4 4 4-4" cls="mt-[4px] mb-[23px]" />
            </div>
          </div>
        </div>

        {/* right strip */}
        <div className="w-[20px] shrink-0 bg-white flex flex-col items-center">
          <div className="h-[18px] w-full border-b border-[#999] flex items-center justify-center">
            <svg width="16" height="15" viewBox="0 0 16 15">
              <path d="M1 3l7-3 7 8-6 4z" fill="#d0d0d0" stroke="#555" strokeWidth=".7" />
              <path d="M5 10l5 4 5-4-2-2z" fill="#4a4a4a" />
              <rect x="10" y="11" width="4" height="2" fill="#6cc04a" />
            </svg>
          </div>
          <div className="h-[19px] w-full border-b border-[#bbb]" />
          <div className="h-[17px] w-full border-b border-[#bbb]" />
          <div className="h-[18px] w-full border-b border-[#bbb]" />
          <svg width="16" height="17" viewBox="0 0 16 17" className="mt-[55px]">
            <circle cx="8" cy="8" r="7.500" fill="#f2e05a" stroke="#bbb" />
            <circle cx="11" cy="10" r="4.500" fill="#d8257a" />
            <circle cx="5" cy="4" r="2" fill="#5aa8e8" />
          </svg>
          <svg width="16" height="16" viewBox="0 0 16 16" className="mt-[20px]">
            <circle cx="8" cy="9" r="6" fill="#fff" stroke="#c00" strokeWidth="2" />
            <path d="M8 5v4h3M1 4l3-3M15 4l-3-3" stroke="#222" strokeWidth="1.300" fill="none" />
          </svg>
          <svg width="14" height="17" viewBox="0 0 14 17">
            <path d="M1 .5h9l3 3v13H1z" fill="#fff" stroke="#222" />
            <path d="M1 .5h9v2H1z" fill="#d00" />
            <circle cx="7" cy="10" r="4" fill="none" stroke="#222" />
            <path d="M7 8v2h2" stroke="#222" fill="none" />
          </svg>
          <div className="mt-[24px] flex flex-col items-center text-[18px] leading-[19.500px] text-[#8b0a0a]">
            <span>B</span>
            <span>C</span>
            <span>D</span>
            <span>E</span>
            <span className="mt-[19px] w-full text-center bg-[#f0f0f0]">G</span>
          </div>
          <span className="mt-[24px] text-[7px] text-[#777]">16:43</span>
        </div>
      </div>

      {/* taskbar */}
      <div className="h-[40px] shrink-0 bg-[#0f1d27] flex items-stretch text-[12px] text-[#f2f2f2] font-['Open_Sans',sans-serif] whitespace-pre tracking-[-0.25px]">
        <div className="w-[48px] flex items-center justify-center pl-[1px]">
          <svg width="17" height="17" viewBox="0 0 17 17"><path d="M0 2.500l7-1v6.500H0zM8 1.300L17 0v8H8zM0 9h7v6.500l-7-1zM8 9h9v8l-9-1.300z" fill="#fff" /></svg>
        </div>
        <div className="w-[48px] flex items-center justify-center">
          <svg width="17" height="16" viewBox="0 0 17 16"><path d="M.5 3.500h10v9H.5zM0 .5h11M0 15.500h11" stroke="#fff" fill="none" /><path d="M14 0v4M14 6v4M14 12v4" stroke="#fff" /></svg>
        </div>
        <div className="w-[56px] flex items-center justify-center">
          <svg width="24" height="26" viewBox="0 0 24 26">
            <path d="M7 2l9-2 2 12-9 3z" fill="#eee" />
            <path d="M3 14l14-3 5 5-2 6-14 2-4-5z" fill="#9aa2a8" />
            <rect x="14" y="16" width="4" height="2" fill="#3fa0e8" />
          </svg>
        </div>
        <div className="w-[152px] border-b-[2px] border-[#76b9ed] flex items-center pl-[8px]">
          <svg width="20" height="18" viewBox="0 0 20 18">
            <path d="M1 10l11-7 7 4v4l-11 6-7-3z" fill="#e4e4e4" />
            <path d="M1 10l7 3 11-6-7-4z" fill="#fafafa" />
            <path d="M8 13v4" stroke="#999" />
          </svg>
          <span className="ml-[6px]">USB-Laufwerk (E:)</span>
        </div>
        <div className="ml-[8px] w-[152px] relative border-b-[2px] border-[#3fd62c] bg-[#2a3942] flex items-center">
          <div className="absolute inset-y-0 left-0 w-[20px] bg-[#3e7a45]" />
          <svg width="22" height="20" viewBox="0 0 22 20" className="relative ml-[7px]">
            <rect x="0" y="3" width="16" height="13" fill="#cfe8cf" stroke="#2f7f3a" />
            <rect x="2" y="5" width="6" height="9" fill="#42c244" />
            <path d="M11 9h5V6l5 5-5 5v-3h-5z" fill="#2a8fe8" />
          </svg>
          <span className="relative ml-[5px]">13% abgeschlossen</span>
        </div>
        <div className="ml-[9px] w-[152px] border-b-[2px] border-[#76b9ed] flex items-center pl-[5px]">
          <svg width="25" height="26" viewBox="0 0 25 26">
            <defs>
              <linearGradient id="ff" x1="0" y1="0" x2="0" y2="1">
                <stop offset="0" stopColor="#ffcb2e" />
                <stop offset=".55" stopColor="#ff5a2a" />
                <stop offset="1" stopColor="#e3207a" />
              </linearGradient>
            </defs>
            <path d="M12 1c0 3 2 4 4 5 4 1 8 5 8 9 0 6-5 11-11 11S1 21 1 15c0-4 2-7 3-9l2 3c1-3 3-6 6-8z" fill="url(#ff)" />
            <circle cx="13" cy="15" r="6.500" fill="#6a2fc8" />
            <path d="M7 12c3-2 7-1 8 1 1 3-2 5-5 4 3 3 9 1 9-4 0-3-2-5-4-6 2 3-2 4-8 5z" fill="#ff8a2a" />
          </svg>
          <span className="ml-[4px]">E-Mail - blum@dat...</span>
        </div>
        <div className="ml-[9px] w-[152px] border-b-[2px] border-[#76b9ed] flex items-center pl-[9px]">
          <DocIcon />
          <span className="ml-[8px]">To-Do-List-2019-10...</span>
        </div>
        <div className="ml-[9px] w-[151px] border-b-[2px] border-[#76b9ed] flex items-center pl-[8px]">
          <DocIcon />
          <span className="ml-[8px]">DQMplus - website...</span>
        </div>
        <div className="ml-[5px] w-[161px] border-b-[2px] border-[#76b9ed] bg-[#3d484e] flex items-center pl-[9px]">
          <Tooth size={22} />
          <span className="ml-[6px]">D1denis</span>
        </div>

        <div className="ml-auto flex items-center">
          <span className="text-[#d8d8d8]">Links</span>
          <svg width="14" height="8" viewBox="0 0 14 8" className="ml-[9px]"><path d="M1 7l6-6 6 6" fill="none" stroke="#fff" strokeWidth="1.200" /></svg>
          <svg width="14" height="14" viewBox="0 0 14 14" className="ml-[11px]">
            <path d="M1 13A12 12 0 0 1 13 1M4 13a9 9 0 0 1 9-9M7 13a6 6 0 0 1 6-6" fill="none" stroke="#bbb" strokeWidth="1" />
            <circle cx="11.500" cy="11.500" r="1.500" fill="#fff" />
          </svg>
          <svg width="17" height="14" viewBox="0 0 17 14" className="ml-[7px]">
            <path d="M1 5h3l4-4v12l-4-4H1z" fill="none" stroke="#fff" />
            <path d="M10 4c2 2 2 4 0 6M12.500 2c3 3 3 7 0 10" fill="none" stroke="#aaa" />
          </svg>
          <div className="ml-[8px] w-[56px] text-center text-[12px] leading-[17px] tracking-normal">
            <div>16:44</div>
            <div>30.10.2019</div>
          </div>
          <svg width="16" height="15" viewBox="0 0 16 15" className="ml-[18px]">
            <path d="M.5.5h15v11H10l-2 3-2-3H.5z" fill="none" stroke="#fff" />
          </svg>
          <div className="ml-[20px] w-px h-full bg-[#3a4850]" />
          <div className="w-[4px]" />
        </div>
      </div>
    </div>
  );
};

export default App;
